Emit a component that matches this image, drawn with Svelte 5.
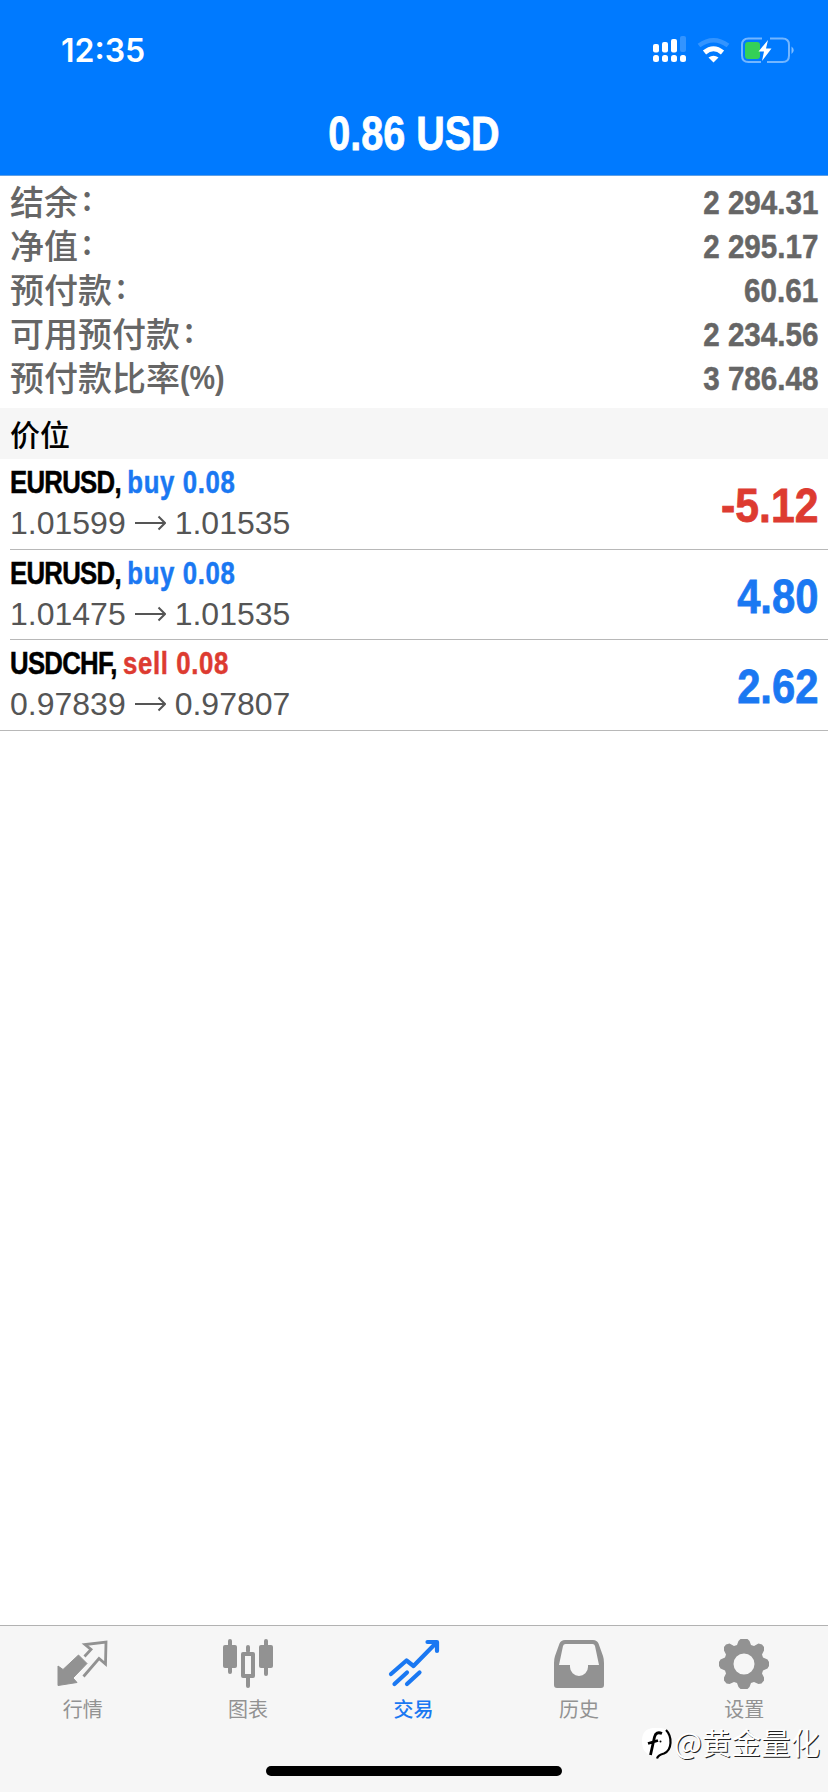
<script lang="ts">
  interface Position {
    id: number
    symbol: string
    side: 'buy' | 'sell'
    volume: string
    open: string
    current: string
    profit: string
  }

  const summary = [
    { label: '结余', colon: true, value: '2 294.31' },
    { label: '净值', colon: true, value: '2 295.17' },
    { label: '预付款', colon: true, value: '60.61' },
    { label: '可用预付款', colon: true, value: '2 234.56' },
    { label: '预付款比率', unit: '(%)', value: '3 786.48' }
  ]

  const positions: Position[] = [
    { id: 1, symbol: 'EURUSD', side: 'buy', volume: '0.08', open: '1.01599', current: '1.01535', profit: '-5.12' },
    { id: 2, symbol: 'EURUSD', side: 'buy', volume: '0.08', open: '1.01475', current: '1.01535', profit: '4.80' },
    { id: 3, symbol: 'USDCHF', side: 'sell', volume: '0.08', open: '0.97839', current: '0.97807', profit: '2.62' }
  ]

  const tabs = [
    { id: 'quotes', label: '行情' },
    { id: 'charts', label: '图表' },
    { id: 'trade', label: '交易' },
    { id: 'history', label: '历史' },
    { id: 'settings', label: '设置' }
  ]

  let activeTab = $state('trade')
</script>

<div class="screen">
  <header>
    <div class="status-bar">
      <span class="time">12:35</span>
      <svg class="status-icons" width="144" height="28" viewBox="0 0 144 28">
        <g fill="#fff">
          <rect x="1" y="9" width="6" height="8.500" rx="2" />
          <rect x="10" y="7" width="6" height="10.500" rx="2" />
          <rect x="19" y="4" width="6" height="13.500" rx="2" />
          <rect x="28" y="1" width="6" height="16" rx="2" opacity="0.2" />
          <rect x="1" y="20" width="6" height="7" rx="2.500" />
          <rect x="10" y="20" width="6" height="7" rx="2.500" />
          <rect x="19" y="20" width="6" height="7" rx="2.500" />
          <rect x="28" y="20" width="6" height="7" rx="2.500" />
          <path d="M61.500 27.500L56.500 22.500Q61.500 19 66.500 22.500Z" />
        </g>
        <g fill="none" stroke="#fff">
          <path d="M47 10.500Q61.500 0 76 10.500" stroke-width="4.500" opacity="0.2" />
          <path d="M52.500 17.500Q61.500 10 70.500 17.500" stroke-width="5" />
          <path d="M110 3.500H96.500Q90 3.500 90 10V20.500Q90 27 96.500 27H109M118 3.500H130.500Q137 3.500 137 10V20.500Q137 27 130.500 27H115" stroke-width="2" opacity="0.45" />
        </g>
        <path d="M139.500 11.500Q144 15.200 139.500 19Z" fill="#fff" opacity="0.5" />
        <rect x="93" y="7" width="15" height="17" rx="3" fill="#34d058" />
        <path d="M116 5L106.500 16.500H112L110 26L119.500 13.500H114Z" fill="#fff" />
      </svg>
    </div>
    <h1>0.86 USD</h1>
  </header>

  <section class="summary">
    {#each summary as item (item.label)}
      <div class="summary-row">
        <div class="label">
          <span>{item.label}</span>
          {#if item.colon}<span class="colon">:</span>{/if}
          {#if item.unit}<span class="unit">{item.unit}</span>{/if}
        </div>
        <span class="value">{item.value}</span>
      </div>
    {/each}
  </section>

  <h2>价位</h2>

  <ul class="positions">
    {#each positions as p (p.id)}
      <li>
        <div class="details">
          <div class="name">{p.symbol}, <span class={p.side}>{p.side} {p.volume}</span></div>
          <div class="prices">
            <span>{p.open}</span>
            <svg width="31" height="18" viewBox="0 0 31 18">
              <path d="M0 9H30M23.500 2.500L30 9L23.500 15.500" />
            </svg>
            <span>{p.current}</span>
          </div>
        </div>
        <span class="profit" class:loss={p.profit.startsWith('-')}>{p.profit}</span>
      </li>
    {/each}
  </ul>

  <nav>
    {#each tabs as tab (tab.id)}
      <button class:active={tab.id === activeTab} onclick={() => (activeTab = tab.id)}>
        <svg width="52" height="52" viewBox="0 0 52 52">
          {#if tab.id === 'quotes'}
            <path d="M21.500 17L30 25.500L16 40L20 44.500L1 47.500V28L6 31.500Z" fill="currentColor" stroke="currentColor" stroke-linejoin="round" />
            <path d="M27.500 18.500L34 11.500L28 6.500L49 4L48.500 26L42 20.500L26.500 38.500" fill="none" stroke="currentColor" stroke-width="2.800" />
          {:else if tab.id === 'charts'}
            <g fill="currentColor">
              <rect x="1" y="7" width="14" height="23" rx="2" />
              <rect x="6" y="1" width="4" height="35" rx="2" />
              <rect x="37" y="7" width="14" height="23" rx="2" />
              <rect x="42" y="1" width="4" height="37" rx="2" />
              <rect x="24" y="7" width="4" height="8" rx="2" />
              <rect x="24" y="38" width="4" height="12" rx="2" />
              <path fill-rule="evenodd" d="M21 14H31Q33 14 33 16V38Q33 40 31 40H21Q19 40 19 38V16Q19 14 21 14ZM23 18V36H29V18Z" />
            </g>
          {:else if tab.id === 'trade'}
            <g fill="none" stroke="currentColor" stroke-width="4.200" stroke-linecap="round" stroke-linejoin="round">
              <path d="M3 36L18.500 22.500L25.500 28L48 5" />
              <path d="M39.500 4H49V13" />
              <path d="M6.500 46L19 34.500M19 46L31.500 34.500" />
            </g>
          {:else if tab.id === 'history'}
            <path fill="currentColor" fill-rule="evenodd" d="M12 2H40Q44 2 45.500 5.500L50 18Q51 21 51 25V47Q51 50 48 50H4Q1 50 1 47V25Q1 21 2 18L6.500 5.500Q8 2 12 2ZM12.500 6Q10.500 6 10 8L6 27H17V29A9 9 0 0 0 35 29V27H46L42 8Q41.500 6 39.500 6Z" />
          {:else}
            <path
              fill="currentColor"
              fill-rule="evenodd"
              d="M22.500 1H29.500L31.500 3L33 7L36 8L40.500 5.500L44 6.500L46 9V12.500L44 16.500L45 19.500L49.500 21.500L51 24V28L49.500 30.500L45 32.500L44 35.500L46 39.500V42.500L43.500 45.500L40.500 46L36 44L33 45L31.500 49L29.500 51H22.500L20.500 49L19 45L16 44L11.500 46L8.500 45.500L6 42.500V39.500L8 35.500L7 32.500L2.500 30.500L1 28V24L2.500 21.500L7 19.500L8 16.500L6 12.500V9L8 6.500L11.500 5.500L16 8L19 7L20.500 3ZM26 15.500A10.500 10.500 0 1 0 26 36.500A10.500 10.500 0 1 0 26 15.500Z"
            />
          {/if}
        </svg>
        <span>{tab.label}</span>
      </button>
    {/each}
    <div class="home-indicator"></div>
  </nav>

  <div class="watermark">
    <svg width="34" height="36" viewBox="0 0 34 36">
      <path d="M13 2H21Q31 3 31 15Q31 25 24 27Q19 28 17 33L12 29Q2 28 2 15Q2 3 13 2Z" fill="#fff" />
      <g fill="none" stroke="#000">
        <path d="M26 4Q31 9 30.500 17Q30 25 24 27.500Q18 29 17 32.500" stroke-width="2.200" />
        <path d="M22 7.500Q16 5 14.500 11L10.500 29M8 17.500L18 14.500" stroke-width="2.800" />
      </g>
      <circle cx="20.500" cy="15.500" r="1" fill="#000" />
    </svg>
    <span>@黄金量化</span>
  </div>
</div>

<style>
  :global(body) {
    margin: 0;
    background: #fff;
  }

  .screen {
    position: relative;
    display: flex;
    flex-direction: column;
    height: 1792px;
    background: #fff;
    font-family: 'Liberation Sans', 'Noto Sans CJK SC', sans-serif;
  }

  header {
    box-sizing: border-box;
    height: 176px;
    background: #007aff;
    border-bottom: 1px solid #5f9fe4;
    color: #fff;
  }

  .status-bar {
    display: flex;
    align-items: center;
    justify-content: space-between;
    height: 100px;
    padding: 0 32px 0 61px;
  }

  .time {
    padding-top: 1px;
    font: 600 32px/36px Inter, sans-serif;
  }

  .status-icons {
    margin-bottom: 3px;
  }

  h1 {
    margin: 0;
    font: bold 48px/68px 'Liberation Sans', sans-serif;
    text-align: center;
    transform: scaleX(0.823);
    -webkit-text-stroke: 0.8px;
  }

  .summary {
    height: 226px;
    padding: 4px 10px 2px;
    color: #666;
  }

  .summary-row {
    display: flex;
    justify-content: space-between;
    height: 44px;
    line-height: 44px;
  }

  .label {
    display: flex;
    height: 42px;
    font-family: 'Noto Sans CJK SC', sans-serif;
    font-size: 34px;
    font-weight: 500;
    line-height: 42px;
  }

  .colon {
    margin-left: 4px;
    line-height: 34px;
  }

  /* condensed bold face */
  .unit,
  .value,
  .name,
  .profit {
    font-family: 'Liberation Sans', sans-serif;
    font-weight: bold;
    transform: scaleX(0.87);
    transform-origin: right;
    -webkit-text-stroke: 0.5px;
  }

  .unit {
    font-size: 33px;
    line-height: 44px;
    transform: scaleX(0.87);
    transform-origin: left;
    -webkit-text-stroke: 0;
  }

  .value {
    font-size: 34px;
  }

  h2 {
    height: 51px;
    margin: 0;
    padding-left: 10px;
    background: #f6f6f6;
    font: 500 30px/50px 'Noto Sans CJK SC', sans-serif;
  }

  .positions {
    flex: 1;
    margin: 0;
    padding: 0;
    list-style: none;
  }

  li {
    display: flex;
    box-sizing: border-box;
    align-items: center;
    justify-content: space-between;
    height: 90px;
    margin-left: 10px;
    padding-right: 10px;
    border-bottom: 1px solid #b8b8b8;
  }

  li:first-child {
    height: 91px;
  }

  li:last-child {
    height: 91px;
    margin-left: 0;
    padding-left: 10px;
  }

  .details {
    padding-bottom: 4px;
  }

  .name {
    font-size: 32px;
    letter-spacing: -0.9px;
    line-height: 42px;
    transform: scaleX(0.805);
    transform-origin: left;
  }

  .name span {
    letter-spacing: 0.8px;
  }

  .buy,
  .profit {
    color: #1a78f2;
  }

  .sell,
  .profit.loss {
    color: #dd3b31;
  }

  .prices {
    display: flex;
    align-items: center;
    gap: 9px;
    color: #555;
    font-size: 32px;
    line-height: 40px;
  }

  .prices path {
    fill: none;
    stroke: #555;
    stroke-width: 2;
  }

  .profit {
    padding-top: 3px;
    font-size: 48px;
    -webkit-text-stroke: 0.8px;
  }

  .profit.loss {
    transform: scaleX(0.89);
  }

  nav {
    position: relative;
    display: flex;
    box-sizing: border-box;
    height: 167px;
    padding-right: 1px;
    border-top: 1px solid #b2b2b2;
    background: #f6f6f6;
  }

  button {
    display: flex;
    flex: 1;
    flex-direction: column;
    align-items: center;
    padding: 12px 0 0;
    border: 0;
    background: none;
    color: #929292;
    font: 20px/28px 'Noto Sans CJK SC', sans-serif;
  }

  button span {
    margin-top: 5px;
  }

  button.active {
    color: #1a78f2;
    font-weight: 500;
  }

  .home-indicator {
    position: absolute;
    bottom: 16px;
    left: 266px;
    width: 296px;
    height: 10px;
    border-radius: 5px;
    background: #000;
  }

  .watermark {
    position: absolute;
    top: 1726px;
    right: 8px;
    display: flex;
    align-items: center;
    color: #fff;
    font: 400 29.500px/32px 'Noto Sans CJK SC', sans-serif;
    text-shadow: 1px 1px 0 #222;
  }

  .watermark span {
    margin-top: -6px;
  }
</style>
